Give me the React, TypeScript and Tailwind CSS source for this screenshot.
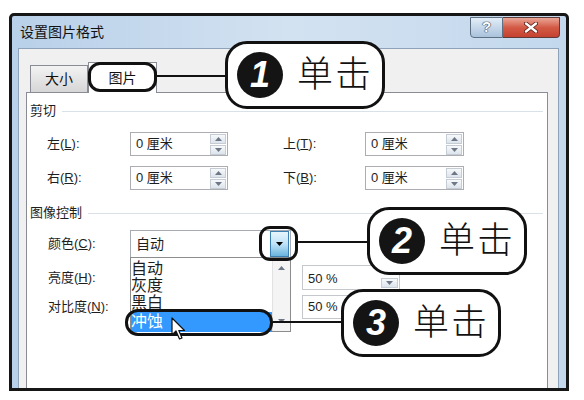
import React from 'react'

function Tri({ up, dark }: { up?: boolean; dark?: boolean }) {
  return (
    <svg width="7" height="4" viewBox="0 0 7 4">
      <path d={up ? 'M0 4 L3.5 0 L7 4 Z' : 'M0 0 L7 0 L3.5 4 Z'} fill={dark ? '#000' : '#6d7785'} />
    </svg>
  )
}

function Spin({ value, w }: { value: string; w: string }) {
  return (
    <div className={`${w} h-[24px] bg-white border border-[#abadb3] flex items-center justify-between pl-[5px] pr-[1px]`}>
      <span className="text-[13px] text-[#1e1e1e]">{value}</span>
      <div className="flex flex-col gap-px">
        <div className="w-[16px] h-[10px] border border-[#c5ccd4] bg-gradient-to-b from-[#f7f9fb] to-[#dde4ec] flex items-center justify-center"><Tri up /></div>
        <div className="w-[16px] h-[10px] border border-[#c5ccd4] bg-gradient-to-b from-[#f7f9fb] to-[#dde4ec] flex items-center justify-center"><Tri /></div>
      </div>
    </div>
  )
}

function Header({ text }: { text: string }) {
  return (
    <div className="flex items-center h-[18px] pl-[3px] pr-[4px]">
      <span className="text-[13px] text-[#1e1e1e]">{text}</span>
      <div className="flex-1 h-px bg-[#dbe1e8] ml-[6px]" />
    </div>
  )
}

function Callout({ n, x, y }: { n: string; x: string; y: string }) {
  return (
    <div className={`absolute z-20 ${x} ${y} w-[160px] h-[68px] bg-white border-[3px] border-[#111] rounded-[22px] flex items-center pl-[9px]`}>
      <div className="w-[46px] h-[46px] rounded-full bg-[#141414] flex items-center justify-center">
        <span className="text-white text-[36px] font-bold italic leading-none font-['Liberation_Sans',sans-serif]">{n}</span>
      </div>
      <span className="ml-[14px] text-[36px] leading-none text-[#111] tracking-[2px] font-light">单击</span>
    </div>
  )
}

export default function App() {
  return (
    <div className="relative w-[584px] h-[400px] bg-white overflow-hidden pt-[13px] pl-[9px] font-['Liberation_Sans','Noto_Sans_CJK_SC',sans-serif]">
      <div className="w-[560px] h-[378px] border-[3px] border-[#161616] rounded-t-[5px] bg-gradient-to-r from-[#b8d0e9] via-[#d3e2f1] to-[#c3d8ed] flex flex-col">
        {/* title bar */}
        <div className="h-[32px] flex items-start justify-between pl-[8px]">
          <span className="mt-[6px] text-[14px] leading-[20px] text-[#111]">设置图片格式</span>
          <div className="flex mt-[1px] mr-[6px]">
            <div className="w-[33px] h-[21px] border border-[#5f6f82] rounded-bl-[4px] bg-gradient-to-b from-[#e3edf7] to-[#a9c2dc] flex items-center justify-center">
              <span className="text-[15px] font-bold text-white [text-shadow:0_0_1px_#2b3b4e,0_0_1px_#2b3b4e,0_0_1px_#2b3b4e]">?</span>
            </div>
            <div className="w-[57px] h-[21px] border border-l-0 border-[#5f3a36] rounded-br-[4px] bg-gradient-to-b from-[#e8a597] via-[#d35a45] to-[#c5412f] flex items-center justify-center">
              <svg width="14" height="11" viewBox="0 0 14 11">
                <path d="M2 1.5 L12 9.5 M12 1.5 L2 9.5" stroke="#5a1a10" strokeWidth="4" strokeLinecap="round" />
                <path d="M2 1.5 L12 9.5 M12 1.5 L2 9.5" stroke="#fff" strokeWidth="2.4" strokeLinecap="round" />
              </svg>
            </div>
          </div>
        </div>
        {/* body */}
        <div className="flex-1 ml-[6px] mr-[7px] bg-[#f0f0f0] border border-b-0 border-[#8ea3ba] pt-[12px] pl-[7px] pr-[10px] flex flex-col">
          <div className="h-[31px] flex items-end">
            <div className="ml-[4px] w-[58px] h-[27px] border border-b-0 border-[#898c95] bg-gradient-to-b from-[#f3f3f3] to-[#d6d6d6] flex items-center justify-center text-[14px] text-[#111]">大小</div>
            <div className="relative z-10 -mb-px w-[69px] h-[31px] border border-b-0 border-[#898c95] bg-white flex items-center justify-center text-[14px] text-[#111]">图片</div>
          </div>
          <div className="flex-1 bg-white border border-b-0 border-[#898c95] flex flex-col pt-[9px]">
            <Header text="剪切" />
            <div className="mt-[12px] flex items-center h-[24px] text-[13px] text-[#1e1e1e]">
              <span className="w-[103px] pl-[20px]">左(<u>L</u>):</span>
              <Spin value="0 厘米" w="w-[98px]" />
              <span className="ml-[55px] w-[82px]">上(<u>T</u>):</span>
              <Spin value="0 厘米" w="w-[99px]" />
            </div>
            <div className="mt-[10px] flex items-center h-[24px] text-[13px] text-[#1e1e1e]">
              <span className="w-[103px] pl-[20px]">右(<u>R</u>):</span>
              <Spin value="0 厘米" w="w-[98px]" />
              <span className="ml-[55px] w-[82px]">下(<u>B</u>):</span>
              <Spin value="0 厘米" w="w-[99px]" />
            </div>
            <div className="mt-[14px]">
              <Header text="图像控制" />
            </div>
            <div className="mt-[8px] flex items-center h-[28px] text-[13px] text-[#1e1e1e]">
              <span className="w-[103px] pl-[21px]">颜色(<u>C</u>):</span>
              <div className="w-[161px] h-[28px] border border-[#a6abb3] bg-white flex items-center justify-between pl-[5px] pr-px">
                <span className="text-[14px]">自动</span>
                <div className="w-[19px] h-[26px] border border-[#3c7fb1] bg-gradient-to-b from-[#e7f5fd] via-[#bfe2f6] to-[#69b4dd] flex items-center justify-center"><Tri dark /></div>
              </div>
            </div>
            <div className="mt-[7px] flex items-center h-[25px] text-[13px] text-[#1e1e1e]">
              <span className="w-[103px] pl-[21px]">亮度(<u>H</u>):</span>
              <div className="ml-[172px] w-[98px] h-[25px] border border-[#c4c7cc] bg-white flex justify-between pl-[5px] pr-px">
                <span className="mt-[3px] text-[13px]">50 %</span>
                <div className="mt-[12px] w-[17px] h-[10px] border border-[#c5ccd4] bg-gradient-to-b from-[#f7f9fb] to-[#dde4ec] flex items-center justify-center"><Tri /></div>
              </div>
            </div>
            <div className="mt-[5px] flex items-center h-[24px] text-[13px] text-[#1e1e1e]">
              <span className="w-[103px] pl-[21px]">对比度(<u>N</u>):</span>
              <div className="ml-[172px] w-[98px] h-[24px] border border-[#c4c7cc] bg-white pl-[5px]">
                <span className="text-[13px] leading-[22px]">50 %</span>
              </div>
            </div>
          </div>
        </div>
      </div>

      {/* dropdown list */}
      <div className="absolute z-20 left-[130px] top-[257px] w-[161px] h-[75px] bg-white border border-[#8c8c8c] flex text-[16px] text-[#1e1e1e]">
        <div className="flex-1 flex flex-col pt-[2px]">
          <span className="leading-[17px]">自动</span>
          <span className="leading-[17px]">灰度</span>
          <span className="leading-[17px]">黑白</span>
          <span className="mt-px h-[20px] leading-[20px] bg-[#3399ff] text-white">冲蚀</span>
        </div>
        <div className="w-[18px] bg-[#f4f4f4] border-l border-[#e2e2e2] flex flex-col items-center justify-between py-[8px]">
          <Tri up />
          <Tri />
        </div>
      </div>

      {/* callout rings around targets */}
      <div className="absolute z-20 left-[88px] top-[62px] w-[69px] h-[30px] border-[3px] border-[#111] rounded-[12px]" />
      <div className="absolute z-20 left-[259px] top-[226px] w-[39px] h-[35px] border-[3px] border-[#111] rounded-[11px]" />
      <div className="absolute z-20 left-[125px] top-[309px] w-[148px] h-[27px] border-[3px] border-[#111] rounded-[13px]" />

      {/* connector lines */}
      <div className="absolute z-20 left-[157px] top-[75px] w-[69px] h-[2px] bg-[#111]" />
      <div className="absolute z-20 left-[298px] top-[241px] w-[70px] h-[2px] bg-[#111]" />
      <div className="absolute z-20 left-[273px] top-[321px] w-[69px] h-[2px] bg-[#111]" />

      <Callout n="1" x="left-[225px]" y="top-[41px]" />
      <Callout n="2" x="left-[367px]" y="top-[207px]" />
      <Callout n="3" x="left-[341px]" y="top-[289px]" />

      {/* mouse pointer */}
      <svg className="absolute z-30 left-[171px] top-[317px]" width="15" height="24" viewBox="0 0 15 24">
        <path d="M1 1 L1 18 L5 14 L8.5 22 L11 21 L7.8 13.5 L13.5 13.5 Z" fill="#fff" stroke="#111" strokeWidth="1.2" strokeLinejoin="round" />
      </svg>
    </div>
  )
}
